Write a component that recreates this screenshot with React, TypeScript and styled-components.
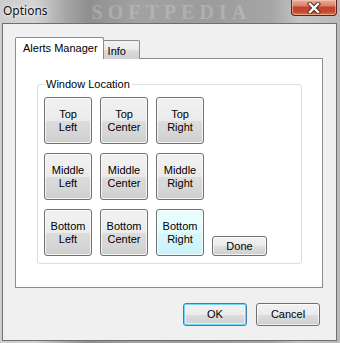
import React, { useState } from "react";
import styled, { createGlobalStyle, css } from "styled-components";

// GLOBAL

const GlobalStyle = createGlobalStyle`
    html, body {
        margin: 0;
        padding: 0;
        background: #ffffff;
    }
    * {
        box-sizing: border-box;
    }
`;

const uiFont = `"Liberation Sans", Arial, sans-serif`;

// WINDOW FRAME

const Window = styled.div`
    width: 340px;
    height: 343px;
    display: flex;
    flex-direction: column;
    padding: 0 3px 2px 2px;
    background: linear-gradient(
        90deg,
        #cdcdcd 0%,
        #d3d3d3 10%,
        #a4a4a4 20%,
        #8f8f8f 26%,
        #a2a2a2 40%,
        #9c9c9c 62%,
        #a6a6a6 80%,
        #c4c4c4 88%,
        #b9b9b9 100%
    );
    font-family: ${uiFont};
`;

const TitleBar = styled.div`
    height: 23px;
    display: flex;
    align-items: flex-start;
`;

const Title = styled.span`
    margin: 3px 0 0 1px;
    font-family: "Noto Sans", "Open Sans", sans-serif;
    font-size: 12px;
    line-height: 16px;
    color: #101010;
    text-shadow: 0 0 6px rgba(255, 255, 255, 0.9), 0 0 2px rgba(255, 255, 255, 0.9);
`;

const Watermark = styled.span`
    margin: 1px 0 0 44px;
    font-family: "Liberation Serif", serif;
    font-size: 20px;
    font-weight: bold;
    letter-spacing: 5px;
    line-height: 22px;
    color: rgba(225, 225, 225, 0.3);
    user-select: none;
`;

const CloseButton = styled.button`
    margin-left: auto;
    width: 46px;
    height: 16px;
    padding: 0;
    display: flex;
    align-items: center;
    justify-content: center;
    border: 1px solid #5e2318;
    border-top: none;
    border-radius: 0 0 4px 4px;
    background: linear-gradient(
        180deg,
        #e9a895 0%,
        #dd8a74 35%,
        #c2432b 50%,
        #c8492f 80%,
        #dc7a52 100%
    );
    box-shadow: inset 0 0 0 1px rgba(255, 220, 200, 0.5);
`;

const CloseIcon = () => (
    <svg width="14" height="12" viewBox="0 0 14 12">
        <path d="M3 2 L11 10 M11 2 L3 10" stroke="#4a2a26" strokeWidth="4.4" strokeLinecap="square" />
        <path d="M3 2 L11 10 M11 2 L3 10" stroke="#ffffff" strokeWidth="2.4" strokeLinecap="square" />
    </svg>
);

// CLIENT AREA

const Client = styled.div`
    flex: 1;
    display: flex;
    flex-direction: column;
    background: #f0f0f0;
    border: 1px solid #6f6f6f;
    padding: 13px 0 0 12px;
`;

const TabStrip = styled.div`
    display: flex;
    align-items: flex-end;
    height: 22px;
    margin-bottom: -1px;
    position: relative;
    z-index: 1;
`;

const Tab = styled.div<{ $active?: boolean }>`
    display: flex;
    align-items: center;
    font-size: 11px;
    color: #000;
    border: 1px solid #898c95;
    border-bottom: none;
    ${({ $active }) =>
        $active
            ? css`
                  height: 22px;
                  padding: 0 5px 2px 7px;
                  background: #ffffff;
                  border-radius: 2px 2px 0 0;
              `
            : css`
                  height: 19px;
                  margin-left: -1px;
                  padding: 2px 13px 0 4px;
                  background: linear-gradient(180deg, #f2f2f2 0%, #ebebeb 50%, #dddddd 51%, #cfcfcf 100%);
                  border-radius: 0 2px 0 0;
              `}
`;

const TabPage = styled.div`
    width: 308px;
    height: 230px;
    background: #ffffff;
    border: 1px solid #898c95;
    padding: 25px 0 0 21px;
`;

const GroupBox = styled.div`
    width: 265px;
    height: 180px;
    border: 1px solid #d5dfe5;
    border-radius: 3px;
    padding: 0 6px 6px 6px;
    display: flex;
    flex-direction: column;
`;

const Legend = styled.span`
    align-self: flex-start;
    margin: -7px 0 0 1px;
    padding: 0 2px 0 1px;
    background: #ffffff;
    font-size: 11px;
    line-height: 13px;
    color: #000;
`;

const LocationGrid = styled.div`
    margin-top: 6px;
    display: grid;
    grid-template-columns: repeat(3, 48px) 55px;
    grid-template-rows: repeat(3, 47px);
    column-gap: 8px;
    row-gap: 9px;
`;

const faceGradient = "linear-gradient(180deg, #f2f2f2 0%, #ebebeb 50%, #dddddd 51%, #cfcfcf 100%)";

const buttonFace = css`
    font-family: ${uiFont};
    font-size: 11px;
    line-height: 13px;
    color: #000;
    border: 1px solid #707070;
    border-radius: 3px;
    padding: 0;
    box-shadow: inset 0 0 0 1px rgba(255, 255, 255, 0.75);
`;

const LocationButton = styled.button<{ $hot?: boolean; $col: number; $row: number }>`
    ${buttonFace};
    grid-column: ${({ $col }) => $col};
    grid-row: ${({ $row }) => $row};
    width: 48px;
    height: 47px;
    text-align: center;
    background: ${({ $hot }) =>
        $hot
            ? "linear-gradient(180deg, #eafdfe 0%, #e2fbfd 50%, #d6f7fb 51%, #c9f3f9 100%)"
            : faceGradient};
`;

const PushButton = styled.button<{ $default?: boolean }>`
    ${buttonFace};
    background: ${faceGradient};
    ${({ $default }) =>
        $default &&
        css`
            border-color: #3c7fb1;
            box-shadow: inset 0 0 0 1px #74d4f8, inset 0 0 0 2px rgba(255, 255, 255, 0.5);
        `}
`;

const DoneButton = styled(PushButton)`
    grid-column: 4;
    grid-row: 3;
    align-self: end;
    width: 55px;
    height: 20px;
`;

const Footer = styled.div`
    display: flex;
    justify-content: flex-end;
    gap: 9px;
    margin: 15px 16px 0 0;
`;

const DialogButton = styled(PushButton)`
    width: 64px;
    height: 23px;
`;

const rows = ["Top", "Middle", "Bottom"];
const cols = ["Left", "Center", "Right"];

const App = () => {
    // Currently highlighted window location
    const [selected, setSelected] = useState("Bottom Right");

    return (
        <>
            <GlobalStyle />
            <Window>
                <TitleBar>
                    <Title>Options</Title>
                    <Watermark>SOFTPEDIA</Watermark>
                    <CloseButton aria-label="Close">
                        <CloseIcon />
                    </CloseButton>
                </TitleBar>
                <Client>
                    <TabStrip>
                        <Tab $active>Alerts Manager</Tab>
                        <Tab>Info</Tab>
                    </TabStrip>
                    <TabPage>
                        <GroupBox>
                            <Legend>Window Location</Legend>
                            <LocationGrid>
                                {rows.map((r, ri) =>
                                    cols.map((c, ci) => {
                                        const name = `${r} ${c}`;
                                        return (
                                            <LocationButton
                                                key={name}
                                                $row={ri + 1}
                                                $col={ci + 1}
                                                $hot={selected === name}
                                                onClick={() => setSelected(name)}
                                            >
                                                {r}
                                                <br />
                                                {c}
                                            </LocationButton>
                                        );
                                    })
                                )}
                                <DoneButton>Done</DoneButton>
                            </LocationGrid>
                        </GroupBox>
                    </TabPage>
                    <Footer>
                        <DialogButton $default>OK</DialogButton>
                        <DialogButton>Cancel</DialogButton>
                    </Footer>
                </Client>
            </Window>
        </>
    );
};

export default App;
